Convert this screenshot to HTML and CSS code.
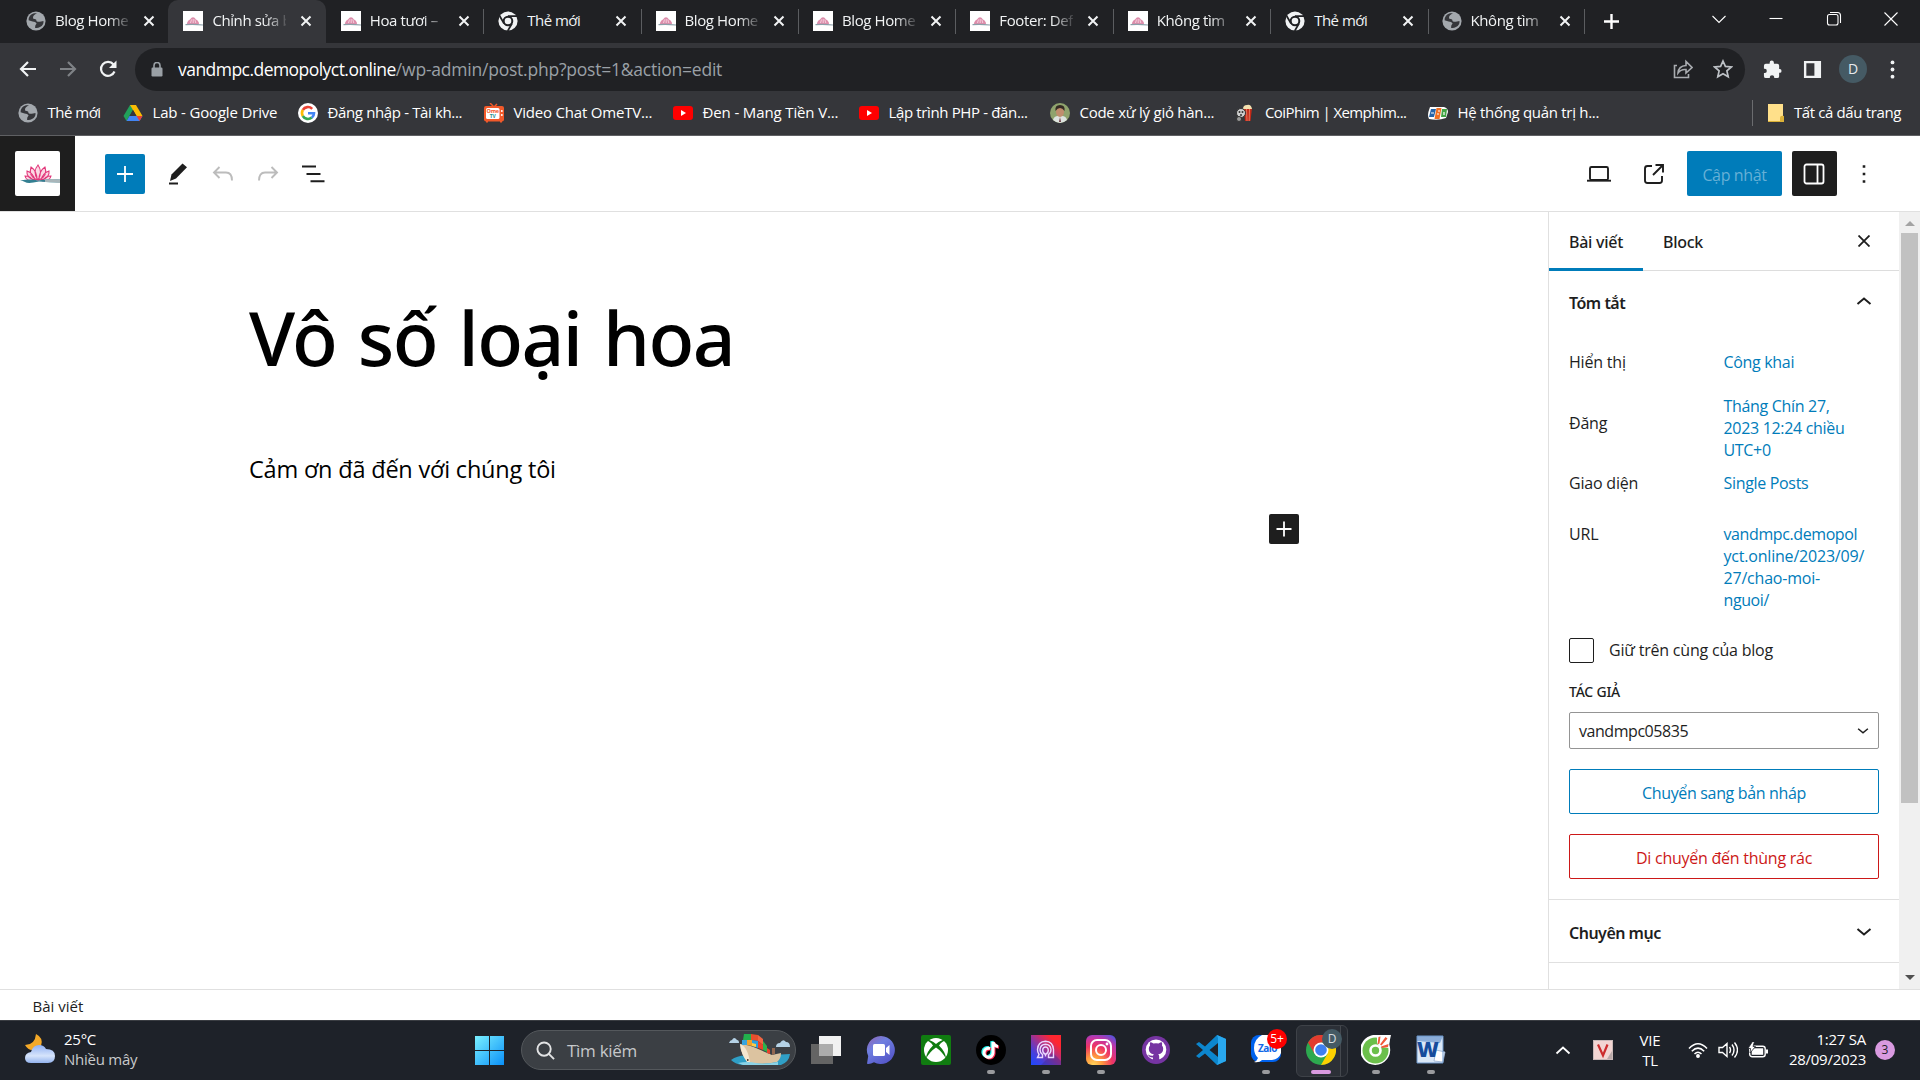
FILE: index.html
```html
<!DOCTYPE html>
<html lang="vi">
<head>
<meta charset="utf-8">
<title>Chỉnh sửa bài viết</title>
<link rel="stylesheet" href="styles.css">
</head>
<body>
<svg class="defs" aria-hidden="true">
  <symbol id="globe" viewBox="0 0 20 20" preserveAspectRatio="none"><circle cx="10" cy="10" r="9.600" fill="#a3a8ad"/><path d="M11 2.200Q7 4 7 6.500q-.2 1.500 1.600 1.500 2 0 2 2.200 1.400.8 3.200.6l3.700-.8q.4 4-3.500 6-2.500 1.500-5 .8 0-2.800 1.600-4.200-1-2.200-4-2.200l-4-1.200Q2.600 3.600 8 2.200Z" fill="#35363a"/></symbol>
  <symbol id="lotus" viewBox="0 0 45 45" preserveAspectRatio="none"><path fill="#fff" d="M0 0h45v45H0z"/><path d="M23 29q-6-8 0-15 5 7 0 15ZM22 29q-9-4-6-13 6 4 6 13Zm2 0q9-4 6-13-6 4-6 13ZM20 29q-9-2-8-9 6 2 8 9Zm6 0q9-2 8-9-6 2-8 9ZM18 30q-7 0-8-5 6 0 8 5Zm10 0q7 0 8-5-6 0-8 5Z" fill="#fbd9e4" stroke="#e2387b" stroke-width="1.100"/><path d="M5 29.500q11-2 18 0 12-2 22-1v3q-11 0-21-1-11 2.500-14 .5-2-1.500-5-1.500" fill="#337f91"/><path d="M30 28.500q8-1 15 0v3.500q-8-1.500-15-1Z" fill="#a9b6ba"/></symbol>
  <symbol id="lotus-s" viewBox="0 0 20 20" preserveAspectRatio="none"><path fill="#fff" d="M0 0h20v20H0z"/><path d="M4 13q0-3 3-4.500Q10 4 13 8.500q3 1.500 3 4.500Z" fill="#dd8dab"/><path d="m7.500 12 1-3.500m1.700 3.500V8m2.600 4-1-3.500" stroke="#f6d5e1" stroke-width=".9"/><path d="M2.500 13.600q8-.8 17.500.4" stroke="#8b9fa9" stroke-width="1.200" fill="none"/></symbol>
  <symbol id="chromium" viewBox="0 0 20 20" preserveAspectRatio="none"><circle cx="10" cy="10" r="9.600" fill="#f1f3f4"/><circle cx="10" cy="10" r="4.300" fill="#f1f3f4" stroke="#202124" stroke-width="2"/><path d="M10 5.200h9M6 12.500 1.700 5M14 12.500 9.700 20" stroke="#202124" stroke-width="1.700"/></symbol>
  <symbol id="x" viewBox="0 0 12 12" preserveAspectRatio="none"><path d="m1.500 1.500 9 9m0-9-9 9" stroke="currentColor" stroke-width="2"/></symbol>
  <symbol id="yt" viewBox="0 0 20 20" preserveAspectRatio="none"><rect y="3" width="20" height="14" rx="3" fill="#f00"/><path d="m8 7 5 3-5 3Z" fill="#fff"/></symbol>
  <symbol id="chev" viewBox="0 0 24 24"><path d="m5.500 9 6.500 5.500L18.500 9" fill="none" stroke="currentColor" stroke-width="2"/></symbol>
</svg>

<div class="tabstrip">
  <div class="tab"><svg class="fav"><use href="#globe"/></svg><span class="tab-title">Blog Home</span><svg class="tab-x"><use href="#x"/></svg></div>
  <div class="tab active"><svg class="fav"><use href="#lotus-s"/></svg><span class="tab-title">Chỉnh sửa b</span><svg class="tab-x"><use href="#x"/></svg></div>
  <div class="tab"><svg class="fav"><use href="#lotus-s"/></svg><span class="tab-title">Hoa tươi –</span><svg class="tab-x"><use href="#x"/></svg></div>
  <div class="tab sep"><svg class="fav"><use href="#chromium"/></svg><span class="tab-title short">Thẻ mới</span><svg class="tab-x"><use href="#x"/></svg></div>
  <div class="tab sep"><svg class="fav"><use href="#lotus-s"/></svg><span class="tab-title">Blog Home</span><svg class="tab-x"><use href="#x"/></svg></div>
  <div class="tab sep"><svg class="fav"><use href="#lotus-s"/></svg><span class="tab-title">Blog Home</span><svg class="tab-x"><use href="#x"/></svg></div>
  <div class="tab sep"><svg class="fav"><use href="#lotus-s"/></svg><span class="tab-title">Footer: Def</span><svg class="tab-x"><use href="#x"/></svg></div>
  <div class="tab sep"><svg class="fav"><use href="#lotus-s"/></svg><span class="tab-title">Không tìm</span><svg class="tab-x"><use href="#x"/></svg></div>
  <div class="tab sep"><svg class="fav"><use href="#chromium"/></svg><span class="tab-title short">Thẻ mới</span><svg class="tab-x"><use href="#x"/></svg></div>
  <div class="tab sep last"><svg class="fav"><use href="#globe"/></svg><span class="tab-title">Không tìm</span><svg class="tab-x"><use href="#x"/></svg></div>
  <div class="newtab"><svg width="17" height="17" viewBox="0 0 17 17"><path d="M8.500 1v15M1 8.500h15" stroke="#fff" stroke-width="2.400"/></svg></div>
  <div class="winctl">
    <svg viewBox="0 0 16 16"><path d="m1.500 5 6.500 6.500L14.500 5" /></svg>
    <svg viewBox="0 0 16 16"><path d="M1.500 7.500h13"/></svg>
    <svg viewBox="0 0 16 16"><rect x="1.500" y="3.500" width="10.500" height="10.500" rx="2"/><path d="M4 1.500h7.500a3 3 0 0 1 3 3V12"/></svg>
    <svg viewBox="0 0 16 16"><path d="m1.500 1.500 13 13m0-13-13 13"/></svg>
  </div>
</div>

<div class="toolbar">
  <div class="nav">
    <svg viewBox="0 0 20 20"><path d="M18 10H3m7-7-7 7 7 7" fill="none" stroke="#f1f3f4" stroke-width="2.200"/></svg>
    <svg viewBox="0 0 20 20"><path d="M2 10h15m-7-7 7 7-7 7" fill="none" stroke="#7f8286" stroke-width="2.200"/></svg>
    <svg viewBox="0 0 20 20"><path d="M16.500 12.500A7 7 0 1 1 15.500 5.500" fill="none" stroke="#f1f3f4" stroke-width="2.200"/><path d="M18.500 1.500V9H11Z" fill="#f1f3f4"/></svg>
  </div>
  <div class="address">
    <svg class="lock" viewBox="0 0 12 15"><rect x=".5" y="5.500" width="11" height="9" rx="1.200" fill="#9aa0a6"/><path d="M3 6V3.500a3 3 0 0 1 6 0V6" fill="none" stroke="#9aa0a6" stroke-width="1.600"/></svg>
    <span class="host">vandmpc.demopolyct.online</span><span class="path">/wp-admin/post.php?post=1&amp;action=edit</span>
    <div class="addr-icons">
      <svg viewBox="0 0 20 20" fill="none" stroke="#a9acb0" stroke-width="1.600"><path d="M4 6.500H1.500v12h14V15M5 14q.5-7 8-7.500V2.500l6 6-6 5.500V10.500Q8 10 5 14Z"/></svg>
      <svg viewBox="0 0 20 20" fill="none" stroke="#bdc1c6" stroke-width="1.700"><path d="m10 2 2.400 5.400 5.900.6-4.400 3.900 1.300 5.800L10 14.700l-5.200 3 1.300-5.800L1.700 8l5.900-.6Z"/></svg>
    </div>
  </div>
  <div class="actions">
    <svg viewBox="0 0 20 20"><path d="M1 6q0-2 2-2h4V3q0-2.500 2.200-2.500T11.500 3v1H15q2 0 2 2v3.500h.7q1.800 0 1.800 2t-1.800 2H17V17q0 2-2 2h-3.200v-1q0-2-2.300-2t-2.300 2v1H3q-2 0-2-2v-3.300h1q2 0 2-2.200t-2-2.200H1Z" fill="#f1f3f4"/></svg>
    <svg viewBox="0 0 20 20"><path d="M1 1h18v18H1Zm2.500 2.500v13H12v-13Z" fill="#f1f3f4" fill-rule="evenodd"/></svg>
    <span class="avatar">D</span>
    <svg viewBox="0 0 20 20" fill="#f1f3f4"><circle cx="10" cy="2.500" r="2"/><circle cx="10" cy="10" r="2"/><circle cx="10" cy="17.500" r="2"/></svg>
  </div>
</div>

<div class="bookmarks">
  <div class="bm b1"><svg><use href="#globe"/></svg><span>Thẻ mới</span></div>
  <div class="bm b2"><svg viewBox="0 0 20 20"><path d="M7 2h6l-6.500 11-3 5L.500 13Z" fill="#21a05a"/><path d="M7 2h6l6.500 11h-6Z" fill="#fbbc04"/><path d="M6.500 13h13l-3 5h-13Z" fill="#4285f4"/><path d="m13.500 13 3 5 3-5Z" fill="#ea4335"/><path d="m10 7 3.500 6h-7Z" fill="#35363a"/></svg><span>Lab - Google Drive</span></div>
  <div class="bm b3"><svg viewBox="0 0 20 20"><circle cx="10" cy="10" r="10" fill="#fff"/><g fill="none" stroke-width="2.600"><path d="M14.200 5.800A6 6 0 0 0 4.800 7" stroke="#ea4335"/><path d="M4.800 7a6 6 0 0 0 0 6" stroke="#fbbc05"/><path d="M4.800 13a6 6 0 0 0 9 1.600" stroke="#34a853"/><path d="M13.800 14.600Q16 13 16 10.300h-6" stroke="#4285f4"/></g></svg><span>Đăng nhập - Tài kh...</span></div>
  <div class="bm b4"><svg viewBox="0 0 20 20"><path d="m6 0 4 4 3-3" stroke="#f1592a" stroke-width="1.500" fill="none"/><rect y="3" width="20" height="15.500" rx="2" fill="#f1592a"/><rect x="2" y="5" width="13.500" height="11" rx="1.500" fill="#fff"/><path d="M3 19.500v-2m14 2v-2" stroke="#f1592a" stroke-width="2"/><circle cx="17.800" cy="8" r="1" fill="#fff"/><circle cx="17.800" cy="12" r="1" fill="#fff"/><text x="8.700" y="10" font-size="5.500" font-weight="700" fill="#f1592a" text-anchor="middle">Ome</text><text x="8.700" y="15" font-size="5" font-weight="700" fill="#288e8d" text-anchor="middle">TV</text></svg><span>Video Chat OmeTV...</span></div>
  <div class="bm b5"><svg><use href="#yt"/></svg><span>Đen - Mang Tiền V...</span></div>
  <div class="bm b6"><svg><use href="#yt"/></svg><span>Lập trình PHP - đăn...</span></div>
  <div class="bm b7"><svg viewBox="0 0 20 20"><circle cx="10" cy="10" r="10" fill="#8fa36d"/><path d="M3 17q1-4 5-4h4q4 0 5 4-7 6-14 0" fill="#dde3df"/><ellipse cx="10" cy="9" rx="4" ry="5" fill="#c08e6e"/><path d="M5.500 8q-1-6 4.500-6t4.500 6q-2-3-4.500-3T5.500 8" fill="#352b24"/><path d="m10 14 1 5h-2Z" fill="#6b3943"/></svg><span>Code xử lý giỏ hàn...</span></div>
  <div class="bm b8"><svg viewBox="0 0 17 20"><path d="m8 6 8-1-1.500 13H9Z" fill="#c52a18"/><path d="m10.500 6 .5 12m2.500-12-.3 12" stroke="#e98a72" stroke-width=".8"/><path d="M7 6q0-4 4-4 4-1 5 4Z" fill="#f3e0af"/><circle cx="5" cy="10" r="4.500" fill="#cfcfcf" stroke="#333"/><circle cx="3.500" cy="9" r="1" fill="#333"/><circle cx="6.500" cy="9" r="1" fill="#333"/><circle cx="5" cy="12" r="1" fill="#333"/><circle cx="3" cy="16" r="2.500" fill="#9b9b9b" stroke="#333"/></svg><span>CoiPhim | Xemphim...</span></div>
  <div class="bm b9"><svg viewBox="0 0 20 20"><path d="M2 4h14q4 1 4 5l-2 6q-8 3-17 1-2-4 0-9Z" fill="#fff"/><path d="M3 6h5l-2 8H1Z" fill="#2465a9"/><path d="M8.500 5h5l-2 11h-5Z" fill="#ef7023"/><path d="M14 6h5l-1 8h-5Z" fill="#42a546"/><path d="M3 10h3m4-2h2m-3 3h2m5-2v3" stroke="#fff" stroke-width="1.200"/></svg><span>Hệ thống quản trị h...</span></div>
  <div class="bm all"><svg viewBox="0 0 16 18"><path d="M0 0h15v18H0Z" fill="#ffe08a"/><path d="M0 17h16v1H0ZM12 14q0-3 4-2v6h-4Z" fill="#dcb238"/></svg><span>Tất cả dấu trang</span></div>
</div>

<div class="wp-head">
  <div class="site"><svg><use href="#lotus"/></svg></div>
  <div class="tools">
    <span class="add"><svg viewBox="0 0 30 30"><path d="M15 7v16M7 15h16" stroke="#fff" stroke-width="1.800"/></svg></span>
    <svg viewBox="0 0 30 30"><path d="m7 22 1.500-6.500L19.500 4.500l4.500 3.700L13 19.500 7 22Z" fill="#1e1e1e"/><path d="M6 24.500h9" stroke="#1e1e1e" stroke-width="2"/></svg>
    <svg viewBox="0 0 30 30" fill="none" stroke="#bcbcbc" stroke-width="1.900"><path d="M11.500 8 6 13.500l5.500 5.500M6 13.500h12q6 0 6 8"/></svg>
    <svg viewBox="0 0 30 30" fill="none" stroke="#bcbcbc" stroke-width="1.900"><path d="m18.500 8 5.500 5.500-5.500 5.500M24 13.500H12q-6 0-6 8"/></svg>
    <svg viewBox="0 0 30 30" fill="none" stroke="#1e1e1e" stroke-width="1.900"><path d="M4 7.500h14M8.500 15h14M12.500 22.300h14"/></svg>
  </div>
  <div class="head-right">
    <svg viewBox="0 0 30 30" fill="none" stroke="#1e1e1e" stroke-width="1.900"><rect x="6" y="8" width="18" height="13" rx="1.500"/><path d="M3 21.700h24"/></svg>
    <svg viewBox="0 0 30 30" fill="none" stroke="#1e1e1e" stroke-width="1.900"><path d="M13 7H8.500Q6 7 6 9.500v12Q6 24 8.500 24h12q2.500 0 2.500-2.500V17M16.500 6H24v7.500M24 6 14 16"/></svg>
    <span class="update">Cập nhật</span>
    <span class="panel"><svg viewBox="0 0 30 30" fill="none" stroke="#fff" stroke-width="1.800"><rect x="5.500" y="5.500" width="19" height="19" rx="2"/><path d="M18.500 5.500v19"/></svg></span>
    <svg viewBox="0 0 30 30" fill="#1e1e1e"><path d="M13.700 6.200h2.600v2.600h-2.600Zm0 7.500h2.600v2.600h-2.600Zm0 7.500h2.600v2.600h-2.600Z"/></svg>
  </div>
</div>

<div class="main">
  <div class="canvas">
    <h1>Vô số loại hoa</h1>
    <p>Cảm ơn đã đến với chúng tôi</p>
    <span class="inserter"><svg viewBox="0 0 30 30"><path d="M15 7.500v15M7.500 15h15" stroke="#fff" stroke-width="1.800"/></svg></span>
  </div>
  <aside>
    <div class="side">
      <div class="side-tabs"><span class="on">Bài viết</span><span>Block</span><svg class="close" viewBox="0 0 12 12"><path d="m.5.5 11 11m0-11-11 11" stroke="#1e1e1e" stroke-width="1.800"/></svg></div>
      <div class="summary">
        <h2>Tóm tắt<svg class="up"><use href="#chev"/></svg></h2>
        <dl>
          <div class="r1"><dt>Hiển thị</dt><dd>Công khai</dd></div>
          <div class="r2"><dt>Đăng</dt><dd>Tháng Chín 27,<br>2023 12:24 chiều<br>UTC+0</dd></div>
          <div class="r3"><dt>Giao diện</dt><dd>Single Posts</dd></div>
          <div class="r4"><dt>URL</dt><dd>vandmpc.demopol<br><span>yct.online/2023/09/</span><br><span>27/chao-moi-</span><br>nguoi/</dd></div>
        </dl>
        <label class="sticky"><i></i>Giữ trên cùng của blog</label>
        <div class="author">TÁC GIẢ</div>
        <div class="select">vandmpc05835<svg><use href="#chev"/></svg></div>
        <div class="btn draft">Chuyển sang bản nháp</div>
        <div class="btn trash">Di chuyển đến thùng rác</div>
      </div>
      <h2 class="cats">Chuyên mục<svg><use href="#chev"/></svg></h2>
    </div>
    <div class="scroll"><i class="s-up"></i><i class="thumb"></i><i class="s-down"></i></div>
  </aside>
</div>
<div class="crumb">Bài viết</div>

<div class="taskbar">
  <div class="weather">
    <svg viewBox="0 0 30 30"><defs><linearGradient id="cl" x2="0" y2="1"><stop stop-color="#8fb0f2"/><stop offset=".6" stop-color="#d6e4fb"/><stop offset="1" stop-color="#93b3ee"/></linearGradient></defs><path d="M11 0q8 4 5 12l-9 4Q3 16 0 11q10 0 11-11" fill="#f4a928"/><path d="M6 29q-6 0-6-5t6-6q2-7 8-7 5 0 7 4 9 0 9 7 0 7-7 7Z" fill="url(#cl)"/></svg>
    <div><b>25°C</b><span>Nhiều mây</span></div>
  </div>
  <div class="apps">
    <svg class="start" viewBox="0 0 29 29"><defs><linearGradient id="wn" x2="1" y2="1"><stop stop-color="#7af0ff"/><stop offset="1" stop-color="#0a90f8"/></linearGradient></defs><path d="M0 0h14v14H0Zm15 0h14v14H15ZM0 15h14v14H0Zm15 0h14v14H15Z" fill="url(#wn)"/></svg>
    <div class="search">
      <svg class="mag" viewBox="0 0 20 20" fill="none" stroke="#e2e3e4" stroke-width="2"><circle cx="8.500" cy="8.500" r="7"/><path d="m13.500 13.500 5.500 5.500"/></svg>
      <span>Tìm kiếm</span>
      <svg class="ship" viewBox="0 0 64 34"><path d="M3 27q8-6 20-4l39-2q-1 8-9 11H14Q7 31 3 27" fill="#2f9fc6"/><path d="M1 10q1-3 3-3 2-4 5 0 2 0 2 3ZM48 14q0-4 4-4 3-5 6-1 4 0 4 5Z" fill="#b5d2e6"/><path d="M12 11q10 1 16 4l16 7 9-2q0 6-4 9-13 3-27 1-9-6-10-19" fill="#dcc3a0"/><path d="M12 11q8 3 10 19l-3-1q-6-8-7-18" fill="#f5e6cf"/><path d="M16 1h7v6h-8Z" fill="#22b14c"/><path d="m23 1 7 1v6l-7-1Z" fill="#e94f2d"/><path d="m30 2 5 4v6l-5-4Z" fill="#f06543"/><path d="M14 7h5v5h-5Z" fill="#39a4dd"/><path d="M19 7h5v6l-5-1Z" fill="#f2a22b"/><path d="m24 7 6 1v7l-6-2Z" fill="#2e9fe0"/><path d="m30 8 5 4v5l-5-2Z" fill="#e8432a"/><path d="m35 8 4 5v6l-4-2Z" fill="#2bb24c"/><path d="m24 10 4 1v3l-4-1Z" fill="#fc4"/><path d="m39 15 3 2v4l-3-1Z" fill="#e8432a"/><path d="M10 30q10-2 18 0t22-1v3H15Z" fill="#8bd3e6"/><path d="M44 15h3v6l-3 1Z" fill="#946850"/><path d="M19 26h1.500v2H19Z" fill="#5a4636"/></svg>
    </div>
    <svg class="app" viewBox="0 0 30 30"><path d="M8 1h22v20H8Z" fill="#f1f1f1"/><path d="M0 9h22v20H0Z" fill="#646464"/><path d="M8 9h14v12H8Z" fill="#acacac"/></svg>
    <svg class="app" viewBox="0 0 30 30"><defs><linearGradient id="ch" x2=".7" y2="1"><stop stop-color="#9264b0"/><stop offset=".4" stop-color="#6f7fe0"/><stop offset="1" stop-color="#5455c8"/></linearGradient></defs><path d="M15 1a14 14 0 1 1-7 26.200Q4 29.500 1 28.800L2.200 21A14 14 0 0 1 15 1" fill="url(#ch)"/><rect x="7" y="9" width="12" height="12" rx="1.500" fill="#fff"/><path d="m20 13 3.500-3v10L20 17Z" fill="#fff"/></svg>
    <svg class="app" viewBox="0 0 30 30"><rect width="30" height="30" rx="2" fill="#107c10"/><circle cx="15" cy="15" r="12" fill="#fff"/><path d="M5 4.500Q9 4 15 9q6-5 10-4.500L24 6q-3 0-6 4.500 7 7 7 13-4-7-10-11-6 4-10 11 0-6 7-13Q9 6 6 6Z" fill="#107c10"/></svg>
    <div class="run"><svg viewBox="0 0 30 30"><circle cx="15" cy="15" r="15" fill="#000"/><g fill="none" stroke-width="3"><path d="M14 13.500a4.500 4.500 0 1 0 3 4.500V7q1 4 5 4.500" stroke="#25f4ee" transform="translate(-1.200 -.8)"/><path d="M14 13.500a4.500 4.500 0 1 0 3 4.500V7q1 4 5 4.500" stroke="#fe2c55" transform="translate(1 .8)"/><path d="M14 13.500a4.500 4.500 0 1 0 3 4.500V7q1 4 5 4.500" stroke="#fff"/></g></svg></div>
    <div class="run"><svg viewBox="0 0 30 30"><defs><linearGradient id="pb" x1="0" y1="1" x2="1" y2="0"><stop stop-color="#1b49ff"/><stop offset=".25" stop-color="#4740dd"/><stop offset=".6" stop-color="#c02c74"/><stop offset=".8" stop-color="#ff2630"/></linearGradient></defs><path d="M0 0h30v30H0Z" fill="url(#pb)"/><path d="m22 18 8 8v4H10Z" fill="#3c2a9066"/><path d="M11.500 22.500H6.500l1.500-3q-1.500-2-1.500-5 .5-8 8-8.300 7.500.3 8 8.300v8h-5v-3q2.500-1.500 2.500-5-.5-5-5.500-5.200-5 .2-5.500 5.200 0 3.500 2.500 5Zm3-1v-2q-2.800-1.200-2.800-4.500.3-3 2.800-3t2.800 3q0 3.300-2.800 4.500" fill="none" stroke="#ead7ff" stroke-width="1.400"/></svg></div>
    <div class="run"><svg viewBox="0 0 30 30"><defs><radialGradient id="ig" cx=".25" cy="1" r="1.150"><stop stop-color="#ffd55c"/><stop offset=".25" stop-color="#ff9a3e"/><stop offset=".55" stop-color="#ef3564"/><stop offset=".8" stop-color="#bf36a9"/><stop offset="1" stop-color="#5b51d8"/></radialGradient></defs><rect width="30" height="30" rx="6" fill="url(#ig)"/><g fill="none" stroke="#fff" stroke-width="2"><rect x="5" y="5" width="20" height="20" rx="6"/><circle cx="15" cy="15" r="5"/></g><circle cx="21" cy="9" r="1.400" fill="#fff"/></svg></div>
    <div class="run idle"><svg viewBox="0 0 30 30"><circle cx="15" cy="15" r="14" fill="#7634a2"/><circle cx="15" cy="14.800" r="10.300" fill="#fff"/><path d="M12 26v-3.500q-4 .3-5-3 2.500 1.500 5 1.200.2-1 .8-1.500-5-.7-5-5.500 0-1.800 1.200-3.200-.4-1.700.2-3.200 1.500 0 3.200 1.300 2.600-.7 5.200 0Q19.300 7.300 20.800 7.300q.6 1.500.2 3.200 1.200 1.400 1.200 3.200 0 4.800-5 5.500 1 .8 1 2.300V26Z" fill="#7634a2"/></svg></div>
    <div class="run idle"><svg viewBox="0 0 30 30"><path d="m21 0 9 4v22l-9 4L9 18.500 3 23l-3-2 7-6-7-6 3-2 6 4.500Zm1 8-8.500 7 8.500 7Z" fill="#0c86cd"/><path d="m21 0 9 4v22l-9 4 1-3V3Z" fill="#29a8ee"/></svg></div>
    <div class="run zalo"><svg viewBox="0 0 30 30"><rect width="30" height="27" rx="8" fill="#0062ed"/><path d="M7 23q-4-4-4-10Q3 4 11 0h12q7 1 7 8v10q-2 6-9 7H11q-3 3-8 2 3-1 4-4" fill="#fff"/><text x="16.500" y="17" text-anchor="middle" font-size="10" font-weight="700" fill="#1167e8">Zalo</text></svg><em>5+</em></div>
    <div class="run chrome"><svg viewBox="0 0 30 30"><circle cx="15" cy="15" r="15" fill="#2da94f"/><path d="M2 7.500A15 15 0 0 1 28 7.500H15L8.500 18.700Z" fill="#e33b2e"/><path d="M28 7.500A15 15 0 0 1 15 30l6.500-11.300L17 7.500Z" fill="#fdd000"/><circle cx="15" cy="15" r="7.500" fill="#fff"/><circle cx="15" cy="15" r="5.800" fill="#3f7ff0"/></svg><em>D</em></div>
    <div class="run"><svg viewBox="0 0 30 30"><path d="M16 0h14l-2 9a15 15 0 1 1-12-9" fill="#fff"/><circle cx="14.500" cy="15.500" r="13" fill="#6bbf4b"/><path d="M16 0h13l-1 13-9-1-3-4Z" fill="#fff"/><path d="m17.500 2 2-.5-1 7-2 1Zm7 0 2 1.500-6 7-1.500-1Zm3 7-.500 3-6 1-1-1.500Z" fill="#f15a3a"/><circle cx="14.500" cy="15.500" r="5" fill="none" stroke="#fff" stroke-width="2.600"/></svg></div>
    <div class="run"><svg viewBox="0 0 30 30"><path d="M1 1h26v27H1Z" fill="#dbe8f7"/><path d="m1 1 26 0-3 7L1 6Z" fill="#8badd9"/><path d="m20 15 9 2-2 10-9-1Z" fill="#fff" stroke="#96add0" stroke-width=".8"/><path d="M1 1h26v27H1Z" fill="none" stroke="#6d97cb"/><text x="12" y="22" text-anchor="middle" font-size="21" font-weight="800" fill="#164c9c">W</text></svg></div>
  </div>
  <div class="tray">
    <svg class="t-chev" viewBox="0 0 16 16"><path d="m1.500 11.500 6.500-6 6.500 6" fill="none" stroke="#fff" stroke-width="1.800"/></svg>
    <svg class="t-v" viewBox="0 0 20 20"><path d="M0 0h20v20H0Z" fill="#c9b9b8"/><path d="M1 1h18v18H1Z" fill="#f2d5d2"/><path d="m14 19 5-8v8Z" fill="#b9a9a8"/><path d="m5 4.500 5 11 4.500-11" fill="none" stroke="#cc2c2c" stroke-width="2.200"/></svg>
    <div class="lang">VIE<br>TL</div>
    <svg class="t-net" viewBox="0 0 20 16" fill="none" stroke="#fff" stroke-width="1.500"><path d="M1 6.500q9-9.500 18 0M3.800 9.200q6.200-6.200 12.400 0M6.500 12q3.500-3.500 7 0"/><circle cx="10" cy="14" r="1.200" fill="#fff"/></svg>
    <svg class="t-vol" viewBox="0 0 20 18" fill="none" stroke="#fff" stroke-width="1.400"><path d="M1 6.500h3.500L9 2.500v13l-4.500-4H1ZM11.500 6q2 3 0 6M14 3.500q4 5.500 0 11M16.500 1.500q6 7.500 0 15"/></svg>
    <svg class="t-bat" viewBox="0 0 20 16"><rect x="1.700" y="4.200" width="15.500" height="10.600" rx="2.500" fill="none" stroke="#fff" stroke-width="1.400"/><rect x="3.700" y="6.300" width="11.500" height="6.500" fill="#fff"/><path d="M18 7.500h2v4h-2Z" fill="#fff"/><path d="M4.500-.5 0 6.500h2.500L2 11l5.500-6.500H5L6.500-.5Z" fill="#fff" stroke="#1e2229" stroke-width=".8"/></svg>
    <div class="clock">1:27 SA<br>28/09/2023</div>
    <span class="count">3</span>
  </div>
</div>
</body>
</html>
```
FILE: styles.css
```css
* { box-sizing: border-box; }
body { margin: 0; width: 1920px; height: 1080px; overflow: hidden; background: #fff; font-family: "Open Sans", "Noto Sans", sans-serif; color: #1e1e1e; }
svg { display: block; flex: none; }
h1, h2, p, dl, dd { margin: 0; }
.defs { position: absolute; width: 0; height: 0; }

/* Tab strip */
.tabstrip { height: 43px; background: #202124; display: flex; padding-left: 11px; color: #f1f3f4; }
.tab { width: 157.4px; flex: none; height: 43px; display: flex; align-items: center; padding-left: 15px; border-radius: 10px 10px 0 0; }
.tab.active { background: #35363a; }
.tab.sep { background: linear-gradient(#5b5d60, #5b5d60) 0 9px / 1px 25px no-repeat; border-radius: 0; }
.tab.last { width: 156px; padding-left: 14px; }
.fav { width: 20px; height: 20px; margin-right: 9px; margin-top: -1px; }
.tab-title { width: 74px; overflow: hidden; white-space: nowrap; font-size: 15px; line-height: 24px; letter-spacing: -.4px; margin-top: -3px; -webkit-mask-image: linear-gradient(90deg, #000 72%, rgba(0,0,0,.15)); mask-image: linear-gradient(90deg, #000 72%, rgba(0,0,0,.15)); }
.tab-title.short { letter-spacing: -.5px; -webkit-mask-image: none; mask-image: none; }
.tab-x { width: 12px; height: 12px; margin-left: 14px; margin-top: -1px; }
.newtab { width: 57px; display: flex; align-items: center; padding-left: 19px; background: linear-gradient(#5b5d60, #5b5d60) 0 9px / 1px 25px no-repeat; }
.winctl { margin-left: auto; display: flex; gap: 41.500px; padding: 11px 21px 0 0; }
.winctl svg { width: 16px; height: 16px; fill: none; stroke: #fff; stroke-width: 1.100; }

/* Toolbar */
.toolbar { height: 53px; background: #35363a; display: flex; align-items: center; }
.nav { width: 135px; display: flex; gap: 20px; padding: 0 0 1px 18px; }
.nav svg { width: 20px; height: 20px; }
.address { width: 1610px; height: 43px; border-radius: 22px; background: #202124; display: flex; align-items: center; padding: 0 0 1px 16px; font-size: 17.500px; }
.lock { width: 12px; height: 15px; margin-right: 15px; }
.host { color: #fff; letter-spacing: -.54px; }
.path { color: #9aa0a6; letter-spacing: -.22px; }
.addr-icons { margin-left: auto; display: flex; gap: 20px; padding-right: 12px; }
.addr-icons svg { width: 20px; height: 20px; }
.actions { display: flex; align-items: center; padding: 0 0 1px 18px; }
.actions svg { width: 19px; height: 19px; margin-right: 21px; }
.avatar { width: 28px; height: 28px; border-radius: 50%; background: #455a64; color: #e8eaed; font-size: 14px; line-height: 28px; text-align: center; margin: 0 16px 0 -4px; }
.actions .avatar + svg { margin: 0; }

/* Bookmarks */
.bookmarks { height: 40px; background: #35363a; border-bottom: 1px solid #5f6063; display: flex; padding: 4px 19px 0 18px; color: #fff; font-size: 15px; line-height: 26px; }
.bm { display: flex; align-items: center; height: 26px; white-space: nowrap; flex: none; }
.bm span { margin-top: -2px; }
.bm svg { width: 20px; height: 20px; margin-right: 9.500px; }
.b1 { width: 105px; letter-spacing: -.5px; }
.b2 { width: 175px; letter-spacing: -.17px; }
.b3 { width: 186px; letter-spacing: -.36px; }
.b4 { width: 189px; letter-spacing: -.2px; }
.b5 { width: 186px; letter-spacing: -.13px; }
.b6 { width: 191px; letter-spacing: -.36px; }
.b7 { width: 186px; letter-spacing: -.26px; }
.b8 { width: 192px; letter-spacing: -.58px; }
.b9 { letter-spacing: -.3px; }
.b8 svg { width: 17px; margin-right: 12px; }
.all { margin-left: auto; border-left: 1px solid #6b6c6f; padding-left: 15px; letter-spacing: -.37px; }
.all svg { width: 16px; height: 18px; }

/* Editor header */
.wp-head { height: 76px; border-bottom: 1px solid #e0e0e0; display: flex; align-items: flex-start; }
.site { width: 75px; height: 75px; background: #1e1e1e; padding: 15px; }
.site svg { width: 45px; height: 45px; border-radius: 2px; }
.tools { display: flex; align-items: center; height: 75px; padding-left: 30px; gap: 15px; }
.tools svg { width: 30px; height: 30px; }
.add { width: 40px; height: 40px; border-radius: 2px; background: #007cba; padding: 5px; margin-right: 3px; }
.head-right { margin-left: auto; display: flex; align-items: center; height: 75px; padding-right: 41px; }
.head-right > svg { width: 30px; height: 30px; margin-right: 25px; }
.update { width: 95px; height: 45px; margin-left: -7px; border-radius: 2px; background: #007cba; color: #66b0d6; font-size: 16px; line-height: 48px; text-align: center; letter-spacing: -.37px; }
.panel { width: 45px; height: 45px; border-radius: 2px; background: #1e1e1e; padding: 7.500px 7px; margin: 0 12px 0 10px; }
.panel svg { width: 30px; height: 30px; }
.head-right > svg:last-child { margin: 0; }

/* Canvas */
.main { display: flex; height: 777px; }
.canvas { width: 1548px; padding: 73px 249px 0; color: #000; }
h1 { font: 500 75px/104px "Noto Sans", sans-serif; letter-spacing: -1.550px; word-spacing: 3.500px; }
.canvas p { font-size: 23.500px; line-height: 40px; letter-spacing: -.2px; margin-top: 60px; }
.inserter { display: block; width: 30px; height: 30px; border-radius: 2px; background: #1e1e1e; margin: 25px 0 0 auto; }

/* Settings sidebar */
aside { width: 372px; border-left: 1px solid #e0e0e0; display: flex; font-size: 16px; }
.side { width: 350px; }
.side-tabs { height: 59px; border-bottom: 1px solid #ddd; display: flex; font: 500 16px/61px "Noto Sans", sans-serif; letter-spacing: -.27px; }
.side-tabs span { height: 59px; padding: 0 20px; }
.side-tabs .on { width: 94px; border-bottom: 3px solid #007cba; white-space: nowrap; }
.close { width: 12px; height: 12px; margin: 23px 29px 0 auto; }
.summary { height: 629px; border-bottom: 1px solid #e0e0e0; padding: 0 20px; }
h2 { font: 600 16px/64px "Noto Sans", sans-serif; letter-spacing: -.5px; display: flex; justify-content: space-between; }
h2 svg { width: 24px; height: 24px; margin: 20px 3px 0 0; }
h2 .up { transform: rotate(180deg); margin-top: 18px; }
dl { line-height: 22px; }
dl div { display: grid; grid-template-columns: 154.500px 155px; }
dt { letter-spacing: -.2px; }
dd { color: #007cba; letter-spacing: -.32px; white-space: nowrap; }
.r1 { height: 60px; padding-top: 16px; }
.r2 { height: 66px; padding-top: 0; }
.r2 dt { padding-top: 17px; }
.r3 { height: 51px; padding-top: 11px; }
.r4 { height: 103px; padding-top: 11px; }
.r4 dd { letter-spacing: -.4px; }
.r4 dd span { letter-spacing: -.2px; }
.sticky { display: flex; align-items: center; height: 25px; margin-top: 23px; letter-spacing: -.2px; line-height: 27px; }
.sticky i { width: 25px; height: 25px; border: 1px solid #1e1e1e; border-radius: 2px; margin-right: 15px; }
.author { font: 500 14px/20px "Noto Sans", sans-serif; letter-spacing: -.22px; margin-top: 19px; }
.select { height: 37px; border: 1px solid #949494; border-radius: 2px; margin-top: 10px; padding: 0 6px 0 9px; display: flex; align-items: center; justify-content: space-between; letter-spacing: -.45px; }
.select svg { width: 18px; height: 18px; }
.btn { height: 45px; border: 1px solid; border-radius: 2px; margin-top: 20px; text-align: center; line-height: 47px; }
.draft { color: #007cba; letter-spacing: -.34px; }
.trash { color: #cc1818; letter-spacing: -.25px; }
.cats { height: 63px; line-height: 66px; border-bottom: 1px solid #e0e0e0; padding: 0 20px; }
.scroll { width: 21px; background: #f0f0f0; display: flex; flex-direction: column; align-items: center; }
.s-up { border: 5px solid transparent; border-top: 0; border-bottom: 5px solid #a3a3a3; margin-top: 9px; }
.thumb { width: 17px; height: 570px; background: #c1c1c1; margin-top: 7px; }
.s-down { border: 5px solid transparent; border-bottom: 0; border-top: 5px solid #505050; margin-top: auto; margin-bottom: 9px; }
.crumb { height: 31px; border-top: 1px solid #e0e0e0; padding-left: 32.500px; font-size: 15px; line-height: 33px; }

/* Taskbar */
.taskbar { height: 60px; background: #1e2229; border-top: 1px solid #3a3d42; display: flex; color: #fff; }
.weather { width: 475px; padding: 8px 0 0 25px; display: flex; gap: 9px; font-size: 15px; line-height: 20px; letter-spacing: -.25px; }
.weather svg { width: 30px; height: 30px; margin-top: 5px; }
.weather b, .weather span { display: block; font-weight: 400; }
.weather span { color: #c9cacc; }
.apps { display: flex; align-items: center; height: 58px; }
.start { width: 29px; height: 29px; }
.search { width: 275px; height: 40px; border: 1px solid #54585c; border-radius: 20px; background: #3b3f44; margin: 0 15px 0 17px; display: flex; align-items: center; padding: 0 3px 0 14px; font-size: 17px; letter-spacing: -.28px; color: #c6c8ca; }
.mag { width: 19px; height: 19px; margin-right: 12px; }
.ship { width: 64px; height: 34px; margin-left: auto; }
.app { width: 30px; height: 30px; margin-right: 25px; }
.run { width: 55px; height: 58px; padding-top: 14px; position: relative; }
.run svg { width: 30px; height: 30px; }
.run::after { content: ""; display: block; width: 8px; height: 4px; border-radius: 2px; background: #9a9b9e; margin: 5px 0 0 11px; }
.run.idle::after { display: none; }
.run em { position: absolute; left: 16px; top: 8px; width: 20px; height: 20px; border-radius: 10px; background: #f00; font-style: normal; font-size: 12px; line-height: 20px; text-align: center; }
.zalo text { letter-spacing: -.5px; }
.chrome::before { content: ""; position: absolute; left: -10px; top: 4px; width: 50px; height: 50px; border: 1px solid #3e4248; border-radius: 6px; background: linear-gradient(90deg, #2c3037 43px, #44484e 43px, #44484e 44px, #252930 44px); }
.chrome svg { position: relative; }
.chrome::after { width: 20px; background: #d99ae0; margin-left: 5px; position: relative; }
.chrome em { background: #455a64; color: #d7dde0; }
.tray { margin-left: auto; display: flex; align-items: center; height: 58px; font-size: 15px; line-height: 20px; padding-right: 25px; }
.t-chev { width: 16px; height: 16px; margin-right: 22px; }
.t-v { width: 20px; height: 20px; margin-right: 18px; }
.lang { width: 38px; text-align: center; letter-spacing: -.2px; margin-right: 19px; }
.t-net { width: 20px; height: 16px; margin-right: 10px; }
.t-vol { width: 20px; height: 18px; margin-right: 10px; }
.t-bat { width: 20px; height: 16px; margin-right: 20px; }
.clock { width: 78px; text-align: right; letter-spacing: -.25px; margin: -2px 9px 0 0; }
.count { width: 20px; height: 20px; border-radius: 50%; background: #d99ae0; color: #1e2229; font-size: 12px; text-align: center; }
```
